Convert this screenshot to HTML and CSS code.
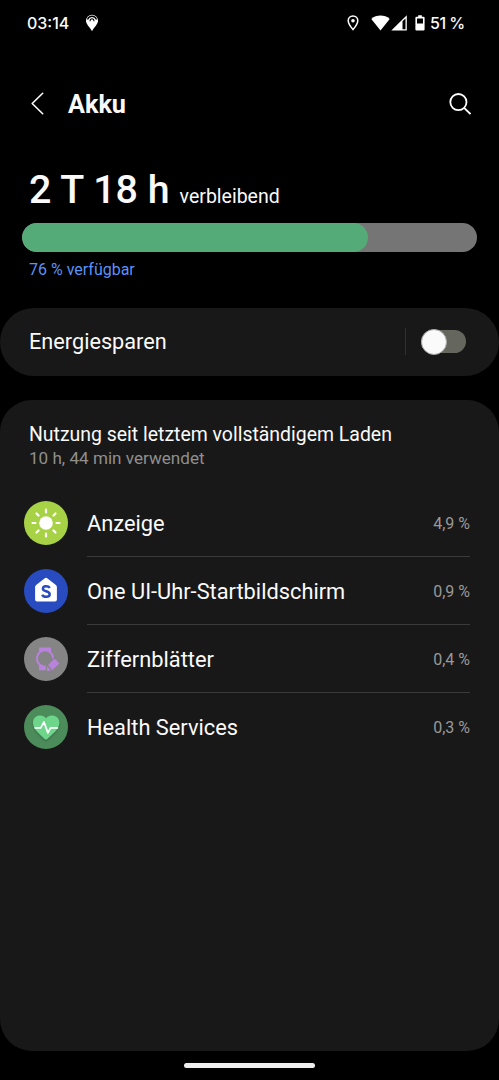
FILE: index.html
```html
<!DOCTYPE html>
<html lang="de">
<head>
<meta charset="utf-8">
<title>Akku</title>
<link rel="stylesheet" href="styles.css">
</head>
<body>
<div class="screen">
  <div class="status">
    <span class="clock">03:14</span>
    <svg class="app-pin" width="14" height="18" viewBox="0 0 14 18"><path fill="#fff" d="M7 .8a6 6 0 0 1 6 6C13 10 10.200 12 7 17.200 3.800 12 1 10 1 6.800a6 6 0 0 1 6-6z"/><path d="M2.500 5.400A4.800 4.800 0 0 1 11.500 5.400" fill="none" stroke="#000" stroke-width="1.300"/><path d="M5.200 7.300A1.900 1.900 0 1 1 8.800 7.300" fill="none" stroke="#000" stroke-width="1.100"/></svg>
    <div class="status-right">
      <svg class="loc" width="12" height="16" viewBox="0 0 12 16"><path d="M6 .9a4.800 4.800 0 0 1 4.800 4.800C10.800 8.800 8.500 11.600 6 14.600 3.500 11.600 1.200 8.800 1.200 5.700A4.800 4.800 0 0 1 6 .9z" fill="none" stroke="#fff" stroke-width="1.500"/><circle cx="6" cy="5.700" r="1.800" fill="#fff"/></svg>
      <svg class="wifi" width="19" height="16" viewBox="0 0 19 16"><path d="M.3 3.900C5.500-.5 13.500-.5 18.700 3.900L9.500 15.400z" fill="#fff"/></svg>
      <svg class="signal" width="16" height="16" viewBox="0 0 16 16"><path fill="#fff" fill-rule="evenodd" d="M15.800.2v15.300H.3zM14.500 3.400L11.500 6.300v7.900h3z"/></svg>
      <svg class="battery" width="10" height="16" viewBox="0 0 10 16"><path fill="#fff" fill-rule="evenodd" d="M3.200.3h3.600v1.400h1.700q1.100 0 1.100 1.100v11.600q0 1.100-1.100 1.100h-7Q.4 15.500.4 14.400V2.800q0-1.100 1.100-1.100h1.700zM2 3.500v5h6v-5z"/></svg>
      <span class="level">51 %</span>
    </div>
  </div>
  <header class="header">
    <svg class="back" width="14" height="24" viewBox="0 0 14 24"><path d="M11.700 1.300L1.200 11.500l10.500 10.200" fill="none" stroke="#fff" stroke-width="1.600" stroke-linecap="round" stroke-linejoin="round"/></svg>
    <h1 class="title">Akku</h1>
    <svg class="search" width="22" height="22" viewBox="0 0 22 22"><g fill="none" stroke="#fff" stroke-width="1.800"><circle cx="9.400" cy="9.100" r="8.100"/><path d="M15.100 14.800L21.500 21"/></g></svg>
  </header>
  <section class="summary">
    <p class="remaining"><strong class="time">2 T 18 h</strong><span class="unit">verbleibend</span></p>
    <div class="bar"><div class="fill" style="width:76%"></div></div>
    <p class="available">76 % verfügbar</p>
  </section>
  <section class="saver">
    <span class="saver-label">Energiesparen</span>
    <span class="separator"></span>
    <span class="switch"><span class="knob"></span></span>
  </section>
  <section class="usage">
    <h2 class="usage-title">Nutzung seit letztem vollständigem Laden</h2>
    <p class="usage-sub">10 h, 44 min verwendet</p>
    <ul class="list">
      <li class="row">
        <svg class="icon" viewBox="0 0 44 44"><circle cx="22" cy="22" r="22" fill="#a8d246"/><circle cx="22" cy="22" r="6.800" fill="#fff"/><path d="M22 8.500v3M22 32.500v3M8.500 22h3M32.500 22h3M12.500 12.500l2 2M29.500 29.500l2 2M12.500 31.500l2-2M29.500 14.500l2-2" stroke="#fff" stroke-width="2.200" stroke-linecap="round"/></svg>
        <div class="cell"><span class="name">Anzeige</span><span class="value">4,9 %</span></div>
      </li>
      <li class="row">
        <svg class="icon" viewBox="0 0 44 44"><circle cx="22" cy="22" r="22" fill="#294bc0"/><path d="M20.500 9.400q1.500-1.200 3 0l8.400 6.500q1 .8 1 2V30.600q0 2-2 2H13.100q-2 0-2-2V17.900q0-1.200 1-2z" fill="#fff"/><path d="M25.700 19C24.500 16.600 18.900 16.500 18.900 19.700 18.900 23 25.700 21.600 25.700 25.300 25.700 28.700 19.500 28.600 18.200 25.700" fill="none" stroke="#294bc0" stroke-width="2.500"/></svg>
        <div class="cell"><span class="name">One UI-Uhr-Startbildschirm</span><span class="value">0,9 %</span></div>
      </li>
      <li class="row">
        <svg class="icon" viewBox="0 0 44 44"><circle cx="22" cy="22" r="22" fill="#858585"/><path fill="#ba82df" d="M15 10.500h12v5l-2 1.500h-8l-2-1.500zM15 26.500h7.500v6.800H15z"/><circle cx="21" cy="21.500" r="8.100" fill="#858585" stroke="#ba82df" stroke-width="1.900"/><path fill="#ba82df" stroke="#858585" stroke-width="2.400" stroke-linejoin="round" paint-order="stroke" d="M30.500 21.400l5 5.200-7 6.500-4.500-5.100zM23 29.300l4 4.300-4 .5z"/></svg>
        <div class="cell"><span class="name">Ziffernblätter</span><span class="value">0,4 %</span></div>
      </li>
      <li class="row">
        <svg class="icon" viewBox="0 0 44 44"><defs><filter id="s" x="-30%" y="-30%" width="160%" height="170%"><feDropShadow dx="0" dy="1.500" stdDeviation="1.200" flood-opacity=".25"/></filter></defs><circle cx="22" cy="22" r="22" fill="#4c8c5b"/><path filter="url(#s)" fill="#6ed68b" d="M22 13.400C18.500 8.500 9 10 9 17.700 9 24.200 16 29 20.500 33.700q1.500 1.500 3 0C28 29 35.300 24.200 35.300 17.700 35.300 10 25.500 8.500 22 13.400z"/><path d="M10.500 22.900h6.300l3.100-6 4 11 2.700-5h7.500" fill="none" stroke="#fff" stroke-width="1.700" stroke-linejoin="round"/></svg>
        <div class="cell"><span class="name">Health Services</span><span class="value">0,3 %</span></div>
      </li>
    </ul>
  </section>
  <div class="nav"><span class="handle"></span></div>
</div>
</body>
</html>
```
FILE: styles.css
```css
* { box-sizing: border-box; }
body { margin: 0; background: #000; color: #fafafa; font-family: Roboto, sans-serif; }
h1, h2, p, ul { margin: 0; padding: 0; font-weight: 400; list-style: none; }
svg { display: block; flex: none; }
.screen { height: 1080px; display: flex; flex-direction: column; overflow: hidden; }
.status { height: 46px; flex: none; display: flex; align-items: center; padding: 0 35px 0 27px; font-family: Inter, sans-serif; font-size: 16px; font-weight: 500; white-space: nowrap; }
.clock { width: 58px; }
.status-right { margin-left: auto; display: flex; align-items: center; }
.wifi { margin-left: 11px; }
.signal { margin-left: 1px; }
.battery { margin-left: 8px; }
.level { margin-left: 5px; width: 34px; letter-spacing: -0.5px; }
.loc { margin-right: 1px; }
.header { height: 116px; flex: none; display: flex; align-items: center; padding: 0 28px 0 31px; }
.title { margin-left: 23px; padding-top: 2px; font-size: 25.2px; font-weight: 700; line-height: 30px; }
.search { margin-left: auto; }
.summary { height: 146px; flex: none; padding: 0 22px; }
.remaining { height: 61px; padding: 5px 7px 0; line-height: 46px; white-space: nowrap; }
.time { font-size: 39.4px; font-weight: 500; }
.unit { margin-left: 10px; font-size: 19.5px; }
.bar { height: 29px; border-radius: 15px; background: #757575; overflow: hidden; }
.fill { height: 100%; border-radius: 15px; background: #54ab77; }
.available { padding: 8px 7px 0; font-size: 16px; line-height: 20px; color: #5a92f5; }
.saver { height: 68px; flex: none; display: flex; align-items: center; padding: 0 33px 0 29px; border-radius: 34px; background: #181818; }
.saver-label { margin-right: auto; padding-bottom: 2px; font-size: 21.7px; }
.separator { width: 1px; height: 27px; margin-bottom: 1px; background: #303030; }
.switch { width: 45px; height: 23px; margin: 0 0 1px 15px; border-radius: 12px; background: #65675f; display: flex; align-items: center; }
.knob { width: 26px; height: 26px; flex: none; border-radius: 50%; background: #fafafa; border: 1px solid #aaa; }
.usage { height: 651px; flex: none; margin-top: 24px; padding: 22px 29px 0 24px; border-radius: 32px; background: #181818; }
.usage-title { padding-left: 5px; font-size: 19.45px; line-height: 25px; white-space: nowrap; }
.usage-sub { padding-left: 5px; font-size: 17.1px; line-height: 22px; color: #8f8f8f; }
.list { padding-top: 20px; }
.row { height: 68px; display: flex; align-items: center; }
.icon { width: 44px; height: 44px; }
.cell { flex: 1; height: 68px; margin-left: 19px; padding-top: 2px; display: flex; align-items: center; justify-content: space-between; border-bottom: 1px solid #3a3a3a; }
.row:last-child .cell { border-bottom-color: transparent; }
.name { font-size: 21.8px; }
.value { font-size: 16px; color: #999; }
.nav { flex: 1; display: flex; justify-content: center; padding-top: 12px; }
.handle { width: 131px; height: 5px; border-radius: 3px; background: #eee; }
```
